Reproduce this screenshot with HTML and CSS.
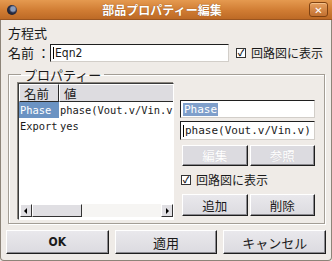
FILE: index.html
```html
<!DOCTYPE html>
<html>
<head>
<meta charset="utf-8">
<link rel="stylesheet" href="styles.css">
</head>
<body>
<div class="window">
  <div class="titlebar">
    <span class="app-icon"></span>
    <span class="title">部品プロパティー編集</span>
    <span class="close">✕</span>
  </div>
  <div class="body">
    <div class="heading">方程式</div>
    <div class="name-row">
      <span class="name-label">名前 ：</span>
      <div class="input name-input"><span class="caret"></span>Eqn2</div>
      <label class="check"><span class="box">✓</span>回路図に表示</label>
    </div>
    <fieldset class="group">
      <legend>プロパティー</legend>
      <div class="group-inner">
        <div class="table">
          <div class="thead">
            <div class="th c1">名前</div>
            <div class="th c2">値</div>
          </div>
          <div class="tbody">
            <div class="tr"><div class="td c1 sel">Phase</div><div class="td c2">phase(Vout.v/Vin.v)</div></div>
            <div class="tr"><div class="td c1">Export</div><div class="td c2">yes</div></div>
          </div>
          <div class="hscroll">
            <span class="arrow left"></span>
            <span class="track"><span class="thumb"></span></span>
            <span class="arrow right"></span>
          </div>
        </div>
        <div class="side">
          <div class="input side-input"><span class="hl">Phase</span></div>
          <div class="input side-input"><span class="caret"></span>phase(Vout.v/Vin.v)</div>
          <div class="btn-row">
            <div class="btn disabled">編集</div>
            <div class="btn disabled">参照</div>
          </div>
          <label class="check side-check"><span class="box">✓</span>回路図に表示</label>
          <div class="btn-row">
            <div class="btn tall">追加</div>
            <div class="btn tall">削除</div>
          </div>
        </div>
      </div>
    </fieldset>
    <div class="footer">
      <div class="btn big ok">OK</div>
      <div class="btn big">適用</div>
      <div class="btn big">キャンセル</div>
    </div>
  </div>
</div>
</body>
</html>
```
FILE: styles.css
```css
* { box-sizing: border-box; }
html, body { margin: 0; padding: 0; }
body {
  width: 332px; height: 261px; overflow: hidden;
  font-family: "Noto Sans CJK JP", "DejaVu Sans", sans-serif;
  font-size: 12px; color: #1a1a1a;
  background: #efebe7;
}
.window {
  width: 332px; height: 261px;
  display: flex; flex-direction: column;
  border: 1px solid #8d8479;
  border-top: none;
  border-radius: 0 0 4px 4px;
  background: #efebe7;
}
.titlebar {
  height: 20px; flex: none;
  margin: 0 -1px;
  display: flex; align-items: center;
  background: linear-gradient(#e59a50, #d07c33 55%, #bd6a26);
  border-bottom: 1px solid #9a5520;
}
.app-icon {
  width: 10px; height: 10px; margin-left: 7px;
  border-radius: 50%;
  background: radial-gradient(circle at 60% 40%, #8c9bb8 0 25%, #2a2f48 45%, #111 100%);
}
.title {
  flex: 1; text-align: center;
  color: #fff; font-weight: bold; font-size: 12px;
  text-shadow: 0 0 1px #7a3f10;
  margin-left: -2px;
}
.close {
  width: 19px; height: 15px; margin-right: 4px;
  border: 1px solid #7f4212; border-radius: 3px;
  background: linear-gradient(#e6a060, #c27030);
  box-shadow: inset 0 1px 0 #f4c08a;
  color: #fff; font-size: 10px; font-weight: bold;
  display: flex; align-items: center; justify-content: center;
  line-height: 1;
}
.body {
  flex: 1;
  display: flex; flex-direction: column;
  padding: 3px 5px 3px 4px;
}
.heading { font-size: 13px; line-height: 18px; padding-left: 3px; margin-top: 1px; }
.name-row {
  display: flex; align-items: center; height: 19px; margin-top: 1px;
}
.name-label { font-size: 13px; width: 45px; padding-left: 3px; white-space: nowrap; }
.input {
  background: #fff;
  border: 1px solid #d2cec9;
  border-top-color: #1f1f1f; border-left-color: #1f1f1f;
  font-family: "DejaVu Sans Mono", monospace; font-size: 11px;
  display: flex; align-items: center;
  padding-left: 2px; white-space: nowrap; overflow: hidden;
}
.caret { width: 1px; height: 12px; background: #000; margin-right: 1px; }
.name-input { width: 179px; height: 18px; font-family: "DejaVu Sans Condensed", "DejaVu Sans", sans-serif; font-size: 12px; }
.check { display: flex; align-items: center; font-size: 12px; white-space: nowrap; }
.name-row .check { margin-left: 7px; }
.box {
  width: 10px; height: 10px; margin-right: 5px;
  background: #fff; border: 1px solid #333;
  font-size: 9px; line-height: 8px; font-weight: bold;
  display: flex; align-items: center; justify-content: center;
  color: #111;
}
.group {
  margin: 6px 1px 0 3px; padding: 0 9px 3px 9px;
  border: 1px solid #a39d95;
  box-shadow: inset 1px 1px 0 #fff, 1px 1px 0 #fff;
  height: 156px;
  min-width: 0;
}
.group legend {
  padding: 0 3px; margin-left: 3px; font-size: 13px; line-height: 13px;
}
.group-inner { display: flex; gap: 6px; }
.table {
  width: 159px; height: 137px; margin-top: 2px;
  background: #fff;
  border: 1px solid #fff;
  border-top-color: #3a3a3a; border-left-color: #3a3a3a;
  box-shadow: -1px -1px 0 #8a857e;
  display: flex; flex-direction: column;
  overflow: hidden;
}
.thead { display: flex; height: 18px; flex: none; background: #dddce0; }
.th {
  height: 18px; display: flex; align-items: center; padding-left: 4px;
  font-size: 12.5px;
  border: 1px solid #2a2a2a; border-top-color: #fff; border-left-color: #fff;
}
.th.c1 { width: 40px; }
.th.c2 { flex: 1; border-right: none; }
.tbody { flex: 1; }
.tr { display: flex; height: 16px; }
.td {
  font-family: "DejaVu Sans Mono", monospace; font-size: 10.4px;
  display: flex; align-items: center; white-space: nowrap; overflow: hidden;
}
.td.c1 { width: 40px; padding-left: 1px; }
.td.c2 { flex: 1; padding-left: 1px; }
.td.sel { background: #6b93c3; color: #fff; }
.hscroll {
  height: 13px; flex: none; display: flex; margin: 0 0 2px 1px;
  background: #f6f5f3;
}
.arrow {
  width: 12px; height: 13px; flex: none;
  background: #e0dfe3;
  border: 1px solid #333; border-top-color: #fff; border-left-color: #fff;
  position: relative;
}
.arrow::after {
  content: ""; position: absolute; top: 3px; left: 3px;
  border: 3px solid transparent;
}
.arrow.left::after { border-right: 3px solid #000; border-left: none; left: 3px; }
.arrow.right::after { border-left: 3px solid #000; border-right: none; left: 4px; }
.track { flex: 1; display: flex; }
.thumb {
  width: 50px; height: 13px; background: #e0dfe3;
  border: 1px solid #333; border-top-color: #fff; border-left-color: #fff;
}
.side { width: 135px; display: flex; flex-direction: column; padding-top: 19px; }
.side-input { height: 18px; width: 135px; margin-bottom: 3px; }
.side-input:nth-child(2) { height: 19px; margin-bottom: 5px; }
.hl { background: #7f9fcb; color: #fff; padding: 0 1px; }
.btn-row { display: flex; gap: 2px; padding-left: 2px; }
.btn {
  flex: 1; height: 21px;
  background: linear-gradient(#e9e8ec, #dcdbe0);
  border: 1px solid #1e1e1e; border-top-color: #fff; border-left-color: #fff;
  box-shadow: inset -1px -1px 0 #8b8a8f;
  display: flex; align-items: center; justify-content: center;
  font-size: 12.5px;
}
.btn.tall { height: 22px; }
.btn.disabled { color: #fff; text-shadow: 0 0 1px #c8c7cc; background: #dcdbe0; }
.side-check { margin: 5px 0 5px 1px; line-height: 18px; }
.footer { display: flex; gap: 6px; margin-top: 6px; padding-left: 1px; }
.btn.big { height: 24px; font-size: 13px; }
.btn.ok { font-family: "DejaVu Sans Condensed", "DejaVu Sans", sans-serif; font-weight: bold; font-size: 12px; }
```
